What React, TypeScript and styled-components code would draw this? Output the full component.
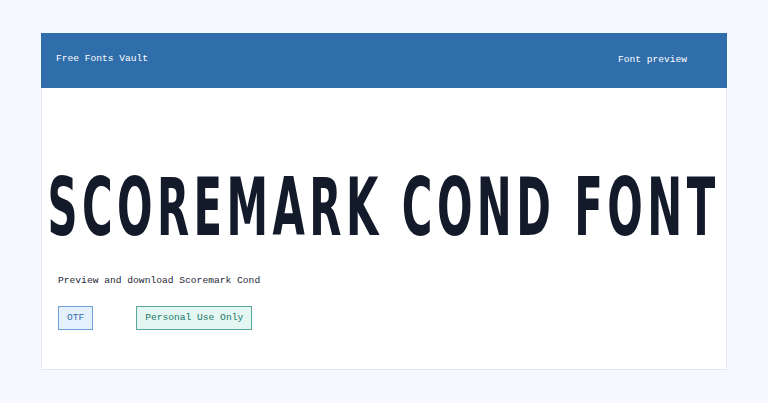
import React from "react";
import styled, { createGlobalStyle } from "styled-components";

const GlobalStyle = createGlobalStyle`
  html, body {
    margin: 0;
    padding: 0;
    background: #f5f9ff;
  }
  body {
    font-family: "Liberation Mono", "DejaVu Sans Mono", monospace;
  }
`;

const Page = styled.div`
  padding: 33px 41px 0;
`;

const Card = styled.main`
  background: #ffffff;
  border: 1px solid #e3e8f0;
  border-top: none;
  height: 337px;
  display: flex;
  flex-direction: column;
  box-sizing: border-box;
`;

const Header = styled.header`
  height: 55px;
  background: #2f6dab;
  display: flex;
  align-items: center;
  justify-content: space-between;
  padding: 0 40px 0 15px;
  margin: 0 -1px;
  color: #ffffff;
  font-size: 9.6px;
`;

const Brand = styled.div`
  margin-top: -5px;
`;

const Nav = styled.nav`
  margin-top: -3px;
`;

const Body = styled.section`
  display: flex;
  flex-direction: column;
  padding: 0 16px;
`;

const TitleRow = styled.div`
  display: flex;
  justify-content: center;
  margin-top: 85px;
  height: 70px;
  overflow: visible;
`;

/* Condensed display face: DejaVu Sans Condensed Bold narrowed further,
   with open tracking for the poster look. */
const Title = styled.h1`
  margin: 0;
  white-space: nowrap;
  font-family: "DejaVu Sans", sans-serif;
  font-stretch: condensed;
  font-weight: 700;
  font-size: 80px;
  line-height: 70px;
  letter-spacing: 7.7px;
  color: #131a2a;
  transform: scaleX(0.58);
  transform-origin: center;
`;

const Subtitle = styled.p`
  margin: 32px 0 0;
  font-size: 9.65px;
  color: #1e2638;
`;

const Badges = styled.div`
  display: flex;
  gap: 43px;
  margin-top: 20px;
`;

const Badge = styled.span<{ $tone: "blue" | "green" }>`
  display: inline-block;
  padding: 5px 8px;
  font-size: 9.6px;
  line-height: 12px;
  border: 1px solid ${(p) => (p.$tone === "blue" ? "#6f9fd8" : "#5aa89a")};
  background: ${(p) => (p.$tone === "blue" ? "#e5f0fd" : "#e4f6f1")};
  color: ${(p) => (p.$tone === "blue" ? "#2f6dab" : "#17796a")};
`;

export default function App() {
  return (
    <>
      <GlobalStyle />
      <Page>
        <Card>
          <Header>
            <Brand>Free Fonts Vault</Brand>
            <Nav>Font preview</Nav>
          </Header>
          <Body>
            <TitleRow>
              <Title>SCOREMARK COND FONT</Title>
            </TitleRow>
            <Subtitle>Preview and download Scoremark Cond</Subtitle>
            <Badges>
              <Badge $tone="blue">OTF</Badge>
              <Badge $tone="green">Personal Use Only</Badge>
            </Badges>
          </Body>
        </Card>
      </Page>
    </>
  );
}
